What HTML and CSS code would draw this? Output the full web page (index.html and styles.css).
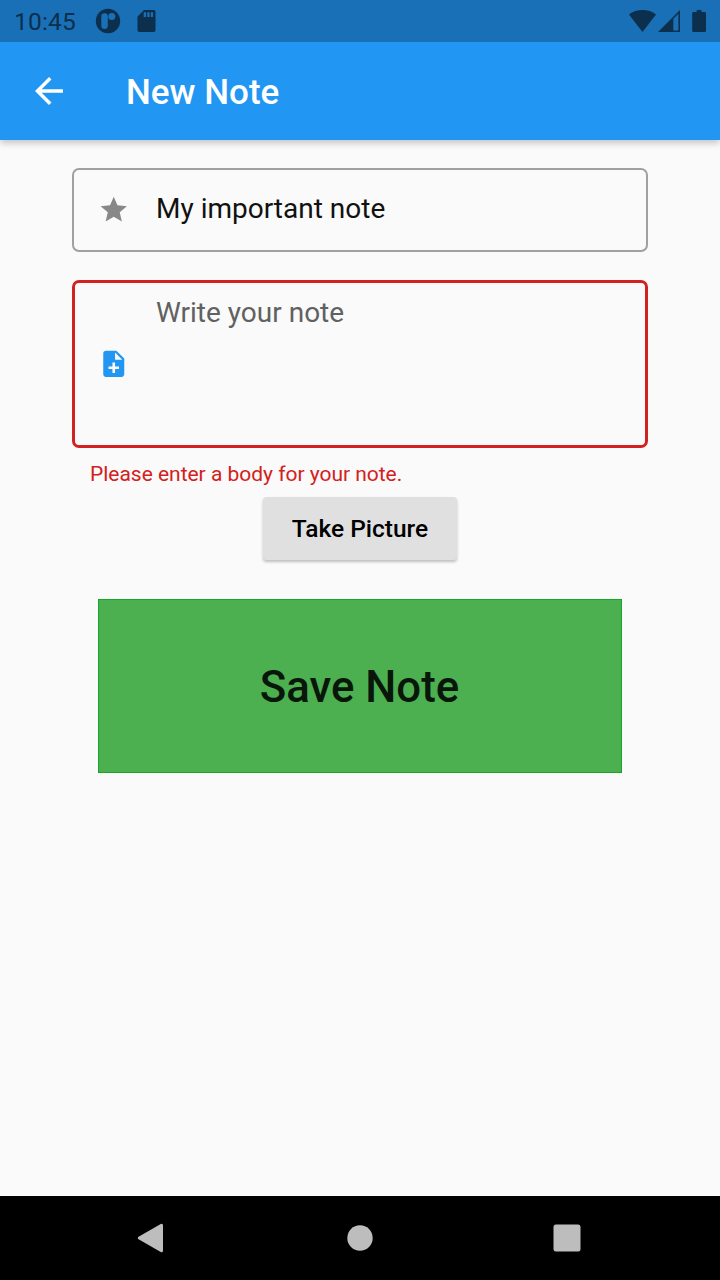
FILE: index.html
```html
<!DOCTYPE html>
<html lang="en">
<head>
<meta charset="utf-8">
<title>New Note</title>
<link rel="stylesheet" href="styles.css">
</head>
<body>
<div class="screen">
  <header class="header">
    <div class="status-bar">
      <span class="clock">10:45</span>
      <svg class="icon-app" width="26" height="26" viewBox="0 0 26 26"><circle cx="13" cy="13" r="12.2" fill="#0b2f4c"/><rect x="6.3" y="5.2" width="6.5" height="15.8" rx="3.2" fill="#1a70b7"/><circle cx="16.8" cy="8.6" r="3.5" fill="#1a70b7"/></svg>
      <svg class="icon-sd" width="20" height="22" viewBox="0 0 20 22"><path fill="#0b2f4c" fill-rule="evenodd" d="M7 0H16.7Q18.5 0 18.5 1.8V20.2Q18.5 22 16.7 22H2.3Q.5 22 .5 20.2V6.5ZM6.7 2.2V7H9V2.2ZM10.2 2.2V7H12.5V2.2ZM13.7 2.2V7H16V2.2Z"/></svg>
      <div class="system-icons">
        <svg width="27" height="22" viewBox="0 0 27 22"><path fill="#0b2f4c" d="M13.5 22 0 4.4C7.5-1.4 19.500-1.4 27 4.400Z"/></svg>
        <svg width="23" height="22" viewBox="0 0 23 22"><path fill="#0b2f4c" fill-rule="evenodd" d="M0 22 22 0V22ZM15.300 8.800V20.400H20.400V3.700Z"/></svg>
        <svg class="icon-battery" width="14" height="22" viewBox="0 0 14 22"><path fill="#0b2f4c" d="M4.700 0H9.500V2H12.700Q14 2 14 3.300V20.700Q14 22 12.700 22H1.500Q.2 22 .2 20.700V3.300Q.2 2 1.500 2H4.700Z"/></svg>
      </div>
    </div>
    <div class="app-bar">
      <svg class="back" width="42" height="42" viewBox="0 0 24 24"><path fill="#fff" d="M20 11H7.830l5.590-5.590L12 4l-8 8 8 8 1.410-1.410L7.830 13H20v-2z"/></svg>
      <h1 class="title">New Note</h1>
    </div>
  </header>
  <main class="form">
    <div class="field">
      <svg class="field-icon" viewBox="0 0 24 24"><path fill="#888" d="M12 17.270 18.180 21l-1.640-7.030L22 9.240l-7.190-.61L12 2 9.190 8.630 2 9.240l5.460 4.730L5.820 21z"/></svg>
      <span class="field-text">My important note</span>
    </div>
    <div class="field field-error">
      <svg class="field-icon" viewBox="0 0 24 24"><path fill="#2196f3" d="M14 2H6c-1.100 0-1.990.9-1.990 2L4 20c0 1.100.89 2 1.990 2H18c1.100 0 2-.9 2-2V8l-6-6zm2 14h-3v3h-2v-3H8v-2h3v-3h2v3h3v2zm-3-7V3.500L18.500 9H13z"/></svg>
      <span class="field-text hint">Write your note</span>
    </div>
    <p class="error">Please enter a body for your note.</p>
    <button class="picture">Take Picture</button>
    <button class="save">Save Note</button>
  </main>
  <nav class="nav-bar">
    <svg width="30" height="30" viewBox="0 0 30 30"><path fill="#bdbdbd" stroke="#bdbdbd" stroke-width="3" stroke-linejoin="round" d="M4.300 15 26.500 2.300V27.700Z"/></svg>
    <svg width="30" height="30" viewBox="0 0 30 30"><circle cx="15" cy="15" r="12.700" fill="#bdbdbd"/></svg>
    <svg width="30" height="30" viewBox="0 0 30 30"><rect x="1.500" y="1.500" width="27" height="27" rx="2.500" fill="#bdbdbd"/></svg>
  </nav>
</div>
</body>
</html>
```
FILE: styles.css
```css
* { box-sizing: border-box; }
body { margin: 0; font-family: Roboto, sans-serif; }
svg { display: block; flex: none; }
.screen {
  width: 720px;
  height: 1280px;
  display: flex;
  flex-direction: column;
  background: #fafafa;
}
.header {
  background: #2196f3;
  box-shadow: 0 3px 7px rgba(0, 0, 0, .22);
}
.status-bar {
  height: 42px;
  padding: 0 14px;
  display: flex;
  align-items: center;
  background: #1a70b7;
}
.clock {
  width: 80.500px;
  font-size: 24.5px;
  line-height: 28px;
  padding-top: 2px;
  letter-spacing: .2px;
  color: #0b2f4c;
}
.icon-sd { margin-left: 16px; }
.system-icons {
  margin-left: auto;
  display: flex;
  gap: 2px;
}
.icon-battery { margin-left: 9px; }
.app-bar {
  height: 98px;
  padding-left: 28px;
  display: flex;
  align-items: center;
}
.title {
  margin: 4px 0 0 56px;
  font-size: 35px;
  font-weight: 500;
  line-height: 42px;
  color: #fff;
}
.form {
  flex: 1;
  padding: 28px 72px 0;
  display: flex;
  flex-direction: column;
  align-items: center;
}
.field {
  width: 576px;
  height: 84px;
  display: flex;
  align-items: center;
  padding-left: 24.250px;
  border: 2px solid #a0a0a0;
  border-radius: 7px;
}
.field-icon { width: 31.500px; height: 31.500px; }
.field-text {
  margin: -2px 0 0 26.250px;
  font-size: 28px;
  line-height: 34px;
  color: #111;
}
.field-error {
  height: 168px;
  margin-top: 28px;
  padding-left: 23.250px;
  border: 3px solid #d32020;
}
.hint {
  align-self: flex-start;
  margin-top: 13px;
  color: #616161;
}
.error {
  align-self: flex-start;
  margin: 13px 0 0 18px;
  font-size: 21px;
  line-height: 26px;
  letter-spacing: -.02px;
  color: #d32020;
}
.picture {
  width: 194px;
  height: 63px;
  margin-top: 10px;
  padding: 0;
  border: 0;
  border-radius: 3.500px;
  background: #e0e0e0;
  box-shadow: 0 2px 3px rgba(0, 0, 0, .24);
  font: 500 24.500px/30px Roboto, sans-serif;
  color: #000;
}
.save {
  width: 524px;
  height: 174px;
  margin: 39px 0 0;
  padding: 1px 1px 0 0;
  border: 1px solid #13a829;
  background: #4caf50;
  font: 500 43.750px/52px Roboto, sans-serif;
  color: #09160a;
}
.nav-bar {
  height: 84px;
  padding: 0 138px 0 135px;
  display: grid;
  grid-template-columns: 210px 207px 30px;
  align-items: center;
  background: #000;
}
```
